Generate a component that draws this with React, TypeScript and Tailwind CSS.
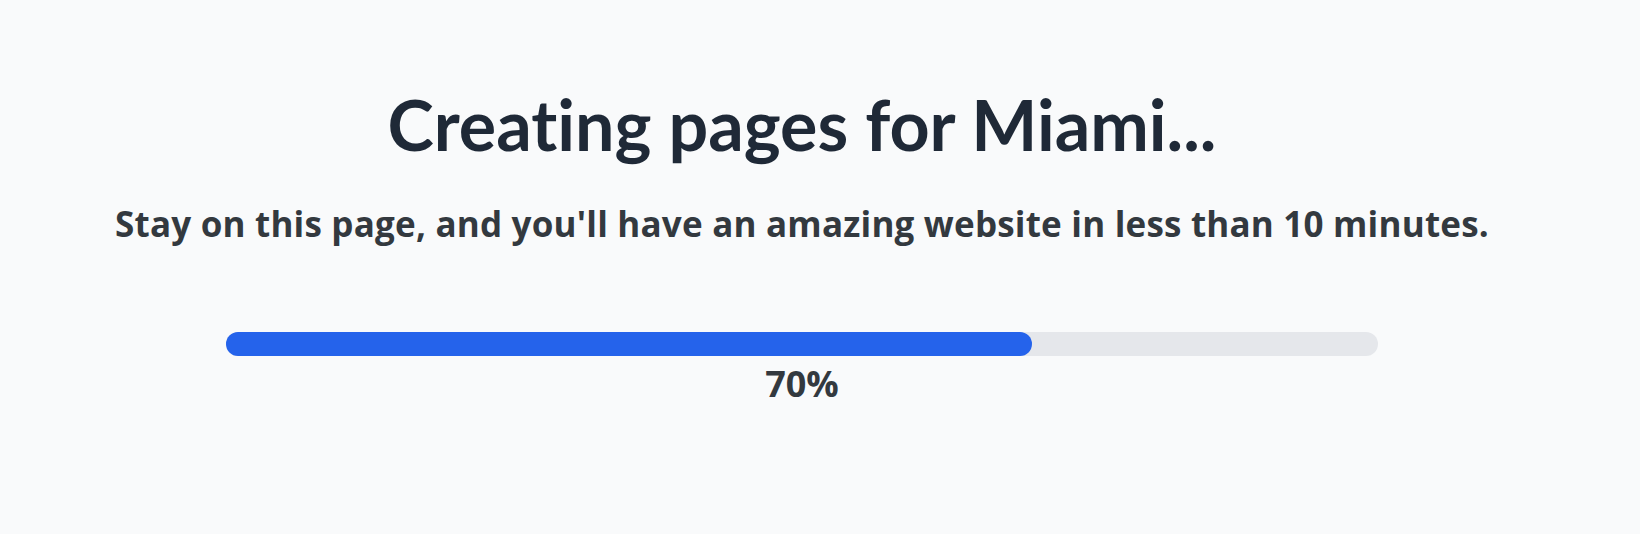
export default function App() {
  const progress = 70;

  return (
    <div className="min-h-screen bg-[#f9fafb] pr-9 flex flex-col items-center pt-[84px]">
      <h1 className="font-['Lato',sans-serif] text-[70px] leading-[80px] font-bold text-[#1f2937] [font-variant-ligatures:none]">
        Creating pages for Miami...
      </h1>
      <p className="mt-8 font-['Open_Sans',sans-serif] text-[35px] leading-[56px] font-bold tracking-[0.2px] text-[#33393f]">
        Stay on this page, and you'll have an amazing website in less than 10 minutes.
      </p>
      <div className="mt-[80px] w-[1152px]">
        <div className="h-6 w-full rounded-full bg-[#e5e7eb]">
          <div className="h-6 rounded-full bg-[#2563eb]" style={{ width: `${progress}%` }} />
        </div>
        <p className="text-center font-['Open_Sans',sans-serif] text-[36px] leading-[56px] font-bold text-[#33393f]">
          {progress}%
        </p>
      </div>
    </div>
  );
}
